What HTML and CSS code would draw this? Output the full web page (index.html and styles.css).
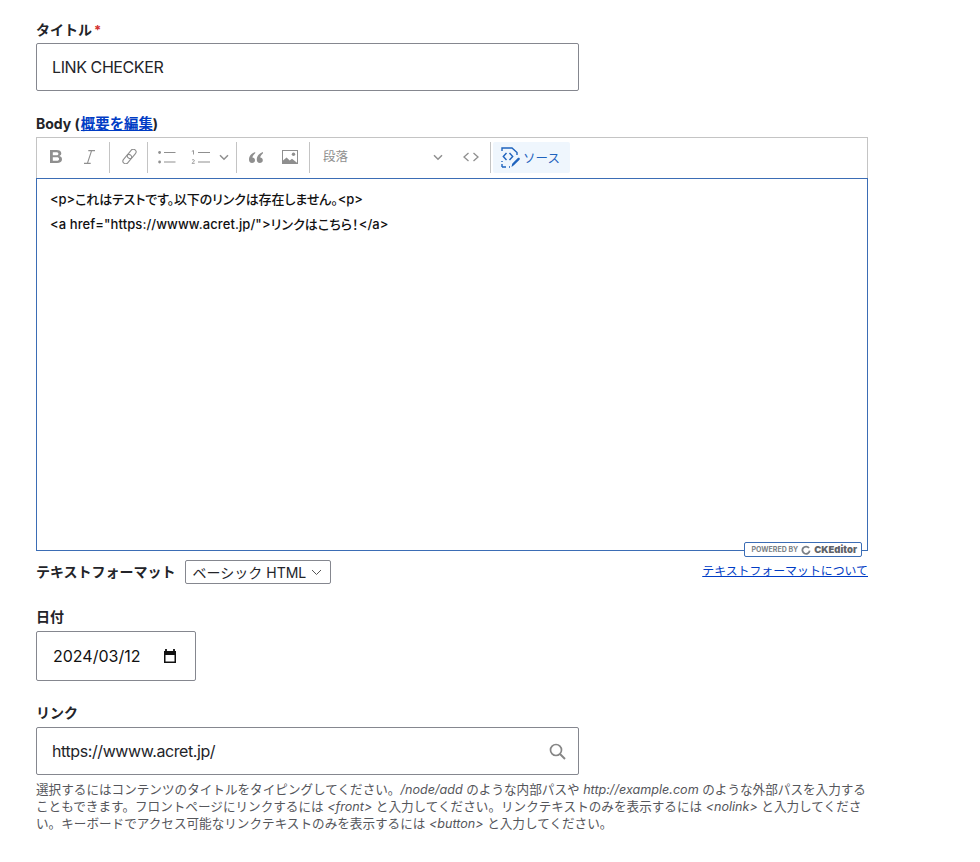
FILE: index.html
```html
<!DOCTYPE html>
<html lang="ja">
<head>
<meta charset="utf-8">
<title>LINK CHECKER</title>
<link rel="stylesheet" href="styles.css">
</head>
<body>
<form class="form">
  <div class="field field-title">
    <label class="label">タイトル<span class="req">*</span></label>
    <div class="textbox title-box"><span class="tight">LINK CHECKER</span></div>
  </div>
  <div class="field field-body">
    <label class="label">Body (<a class="link link-summary" href="#">概要を編集</a>)</label>
    <div class="editor">
      <div class="toolbar">
        <span class="tb tb-b"><svg width="13" height="13" viewBox="0 0 13 13"><path d="M0 0h6.600c2.900 0 4.700 1.200 4.700 3.300 0 1.300-.8 2.300-2 2.800 1.600.4 2.700 1.500 2.700 3.100C12 11.700 10.100 13 7 13H0zM2.800 2.200v3h3.500c1.400 0 2.100-.5 2.100-1.500s-.7-1.500-2.100-1.500zm0 5.100v3.500h3.900c1.600 0 2.400-.6 2.400-1.800S8.300 7.300 6.700 7.300z" fill="#8f8f8f" fill-rule="evenodd"/></svg></span>
        <span class="tb tb-i"><svg width="11" height="14" viewBox="0 0 11 14"><path d="M4.300.6H11M0 13.400h6.700M7.600.6l-4.200 12.800" fill="none" stroke="#8f8f8f" stroke-width="1.100"/></svg></span>
        <i class="sep sep-1"></i>
        <span class="tb tb-l"><svg width="15" height="15" viewBox="0 0 15 15"><g fill="none" stroke="#8f8f8f" stroke-width="1.100" transform="rotate(-50 7.500 7.500)"><rect x="-1.200" y="4.800" width="10.500" height="5.400" rx="2.700"/><rect x="5.700" y="4.800" width="10.500" height="5.400" rx="2.700"/></g></svg></span>
        <i class="sep sep-2"></i>
        <span class="tb tb-ul"><svg width="18" height="14" viewBox="0 0 18 14"><circle cx="1.600" cy="2.500" r="1.400" fill="#8f8f8f"/><circle cx="1.600" cy="12" r="1.400" fill="#8f8f8f"/><path d="M6 2.500h11.500M6 12h11.500" stroke="#8f8f8f" stroke-width="1.200"/></svg></span>
        <span class="tb tb-ol"><svg width="19" height="14" viewBox="0 0 19 14"><path d="M7 2.500h12M7 12h12" stroke="#8f8f8f" stroke-width="1.200"/><path d="M2.500 .5v4M.8 1.400l1.700-.9M1 10.200c.8-1 2.500-.7 2.300.5-.1.700-1.700 1.800-2.300 2.600h2.700" fill="none" stroke="#8f8f8f" stroke-width=".9"/></svg></span>
        <span class="tb tb-c1"><svg width="10" height="7" viewBox="0 0 10 7"><path d="M1 1.200 5 5.200l4-4" fill="none" stroke="#8f8f8f" stroke-width="1.500"/></svg></span>
        <i class="sep sep-3"></i>
        <span class="tb tb-q"><svg width="14" height="11" viewBox="0 0 14 11"><path d="M6.200 0C3.400 1 0 3.400 0 7.500 0 9.700 1 11 3 11c1.700 0 3-1.100 3-2.800C6 6.500 4.700 5.500 3.400 5.500 3.700 3.900 4.800 2.400 6.200 1.300zM14 0c-2.800 1-6.200 3.400-6.200 7.500 0 2.200 1 3.500 3 3.500 1.700 0 3-1.100 3-2.800 0-1.700-1.300-2.700-2.600-2.700.3-1.600 1.400-3.100 2.800-4.200z" fill="#8f8f8f"/></svg></span>
        <span class="tb tb-img"><svg width="16" height="14" viewBox="0 0 16 14"><path d="M0 0h16v14H0zM1 1v9.600l3.600-3.100 3.100 3 2.300-1.700 5 3.900V1z" fill="#8f8f8f" fill-rule="evenodd"/><circle cx="11.500" cy="4.300" r="1.700" fill="#8f8f8f"/></svg></span>
        <i class="sep sep-4"></i>
        <span class="tb-heading">段落</span>
        <span class="tb tb-c2"><svg width="10" height="7" viewBox="0 0 10 7"><path d="M1 1.200 5 5.200l4-4" fill="none" stroke="#8f8f8f" stroke-width="1.500"/></svg></span>
        <span class="tb tb-code"><svg width="16" height="10" viewBox="0 0 16 10"><path d="M5.500 1 1 5l4.500 4M10.500 1 15 5l-4.500 4" fill="none" stroke="#8f8f8f" stroke-width="1.300"/></svg></span>
        <i class="sep sep-5"></i>
        <span class="tb-source">
          <svg width="20" height="21" viewBox="0 0 20 21"><g fill="none" stroke="#1f63bd" stroke-width="1.400"><path d="M2 4V1h10l5 4.500V8"/><path d="M2 15v-1M2 20v-3M2 20h4M9 20h1"/><path d="M6.500 6 3.300 9.500 6.500 13M9.500 6l3.200 3.500L9.500 13"/></g><path d="M11.500 20l.7-3.300 5.600-5.600c.5-.5 1.200-.5 1.700 0s.4 1.200 0 1.600l-5.600 5.600z" fill="#1f63bd"/></svg>
          <span>ソース</span>
        </span>
      </div>
      <div class="content">
        <p class="src-line src-first">&lt;p&gt;これはテストです。以下のリンクは存在しません。&lt;p&gt;</p>
        <p class="src-line src-second">&lt;a href="https://wwww.acret.jp/"&gt;リンクはこちら！&lt;/a&gt;</p>
        <div class="powered">POWERED BY <svg width="10" height="10" viewBox="0 0 11 11"><path d="M8.800 3.400A4 4 0 1 0 9.500 6.300" fill="none" stroke="#7a7f85" stroke-width="2"/></svg> <b>CKEditor</b></div>
      </div>
    </div>
    <div class="format-row">
      <div class="format-left">
        <span class="label label-inline">テキストフォーマット</span>
        <span class="select">ベーシック HTML<svg width="11" height="7" viewBox="0 0 11 7"><path d="M1 1l4.500 4.500L10 1" fill="none" stroke="#555" stroke-width="1"/></svg></span>
      </div>
      <a class="link link-about" href="#">テキストフォーマットについて</a>
    </div>
  </div>
  <div class="field field-date">
    <label class="label">日付</label>
    <div class="textbox date-box"><span>2024/03/12</span><svg width="14" height="15" viewBox="0 0 14 15"><path d="M3 0v3M11 0v3" stroke="#111" stroke-width="1.800"/><path d="M1 2h12v12H1zM2.500 6v6.500h9V6z" fill="#111" fill-rule="evenodd"/></svg></div>
  </div>
  <div class="field field-link">
    <label class="label">リンク</label>
    <div class="textbox link-box"><span class="tight">https://wwww.acret.jp/</span><svg width="17" height="17" viewBox="0 0 17 17"><circle cx="7" cy="7" r="5.500" fill="none" stroke="#868686" stroke-width="1.700"/><path d="M11 11l5 5" stroke="#868686" stroke-width="1.900"/></svg></div>
    <p class="desc">選択するにはコンテンツのタイトルをタイピングしてください。<em>/node/add</em> のような内部パスや <em>http://example.com</em> のような外部パスを入力することもできます。フロントページにリンクするには <em>&lt;front&gt;</em> と入力してください。リンクテキストのみを表示するには <em>&lt;nolink&gt;</em> と入力してください。キーボードでアクセス可能なリンクテキストのみを表示するには <em>&lt;button&gt;</em> と入力してください。</p>
  </div>
</form>
</body>
</html>
```

FILE: styles.css
```css
* { box-sizing: border-box; }
html, body { margin: 0; padding: 0; background: #fff; }
body {
  font-family: Inter, "Noto Sans CJK JP", sans-serif;
  color: #232429;
  height: 862px;
  overflow: hidden;
}
.form { width: 832px; margin-left: 36px; padding-top: 21px; }
.field { display: block; }
.label {
  display: block;
  font-size: 14px;
  line-height: 18px;
  font-weight: 700;
  color: #232429;
  margin-bottom: 4px;
}
.req { color: #d3302f; margin-left: 2px; font-size: 13px; line-height: 0; }
.link { color: #003cc5; text-decoration: underline; }
.link-summary { font-size: 14.400px; margin-left: 1px; line-height: 0; }
.textbox {
  display: flex;
  align-items: center;
  justify-content: space-between;
  border: 1px solid #85878f;
  border-radius: 2px;
  font-size: 16px;
  color: #232429;
  background: #fff;
}
.tight { letter-spacing: -0.410px; }
.title-box { width: 543px; height: 48px; padding: 0 15px; }
.field-body { margin-top: 24px; }
.editor { width: 832px; }
.toolbar {
  position: relative;
  height: 41px;
  border: 1px solid #c4c4c4;
  border-bottom: 0;
  background: #fff;
}
.tb, .sep, .tb-heading, .tb-source { position: absolute; }
.tb { display: flex; align-items: center; justify-content: center; }
.sep { top: 4px; width: 1px; height: 31px; background: #c4c4c4; }
.tb-b { left: 13px; top: 12px; }
.tb-i { left: 47px; top: 12px; }
.sep-1 { left: 72px; }
.tb-l { left: 85px; top: 11px; }
.sep-2 { left: 110px; }
.tb-ul { left: 121px; top: 12px; }
.tb-ol { left: 154px; top: 12px; }
.tb-c1 { left: 182px; top: 16px; }
.sep-3 { left: 199px; }
.tb-q { left: 212px; top: 14px; }
.tb-img { left: 245px; top: 12px; }
.sep-4 { left: 272px; }
.tb-heading { left: 286px; top: 10px; font-size: 12.500px; line-height: 18px; color: #8f8f8f; }
.tb-c2 { left: 396px; top: 16px; }
.tb-code { left: 426px; top: 14px; }
.sep-5 { left: 453px; }
.tb-source {
  left: 456px;
  top: 4px;
  width: 77px;
  height: 31px;
  background: #eff6fd;
  border-radius: 2px;
  display: flex;
  align-items: center;
  gap: 3px;
  padding-left: 7px;
  font-size: 12.500px;
  color: #1f63bd;
}
.content {
  position: relative;
  height: 373px;
  border: 1px solid #3b6db5;
  padding: 11px 13px;
  font-size: 13px;
  font-weight: 500;
  color: #111;
  font-feature-settings: "palt";
}
.src-line { margin: 0 0 7px; line-height: 18px; }
.src-first { letter-spacing: -0.100px; }
.src-second { letter-spacing: 0.090px; }
.powered {
  position: absolute;
  right: 5px;
  bottom: -7px;
  height: 15px;
  padding: 0 4px 0 7px;
  display: flex;
  align-items: center;
  gap: 3px;
  background: #fff;
  border: 1px solid #3b6db5;
  border-radius: 2px;
  font-size: 7px;
  font-weight: 700;
  color: #7a7f85;
  white-space: nowrap;
  font-feature-settings: normal;
}
.powered b { font-size: 9.500px; color: #5f6368; }
.format-row {
  display: flex;
  justify-content: space-between;
  align-items: center;
  height: 24px;
  margin-top: 9px;
}
.format-left { display: flex; align-items: center; gap: 9px; }
.label-inline { margin: 0; }
.select {
  display: inline-flex;
  align-items: center;
  gap: 5px;
  height: 24px;
  width: 146px;
  padding: 0 7px;
  border: 1px solid #85878f;
  border-radius: 2px;
  font-size: 14px;
  color: #232429;
  white-space: nowrap;
}
.link-about { font-size: 11.900px; margin-top: -5px; }
.field-date { margin-top: 24px; }
.field-date .label { margin-bottom: 5px; }
.date-box { width: 160px; height: 50px; padding: 0 18px 0 16px; }
.date-box span { color: #111; }
.field-link { margin-top: 23px; }
.field-link .label { margin-bottom: 5px; }
.link-box { width: 543px; height: 48px; padding: 0 12px 0 15px; }
.desc {
  margin: 6px 0 0;
  width: 834px;
  font-size: 12.600px;
  line-height: 17px;
  color: #55565b;
}
```
